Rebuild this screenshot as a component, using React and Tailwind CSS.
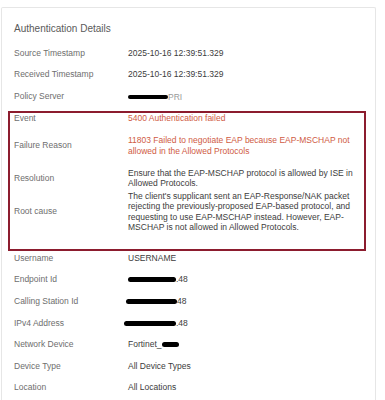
import React from 'react';

// Redaction blob drawn over part of a value
function Blob({ className }) {
  return <span className={`inline-block rounded-full bg-black align-middle ${className}`} />;
}

const topRows = [
  { label: 'Source Timestamp', value: '2025-10-16 12:39:51.329', mt: 'mt-[12.75px]' },
  { label: 'Received Timestamp', value: '2025-10-16 12:39:51.329', mt: 'mt-[11px]' },
  {
    label: 'Policy Server',
    value: (
      <span className="inline-flex items-center">
        <Blob className="w-[40px] h-[4px]" />
        <span className="text-[#9a9a9a]">PRI</span>
      </span>
    ),
    mt: 'mt-[11px]',
  },
];

const boxRows = [
  { label: 'Event', value: '5400 Authentication failed', red: true, mt: 'mt-0' },
  {
    label: 'Failure Reason',
    value: '11803 Failed to negotiate EAP because EAP-MSCHAP not allowed in the Allowed Protocols',
    red: true,
    mt: 'mt-[11.5px]',
  },
  {
    label: 'Resolution',
    value: 'Ensure that the EAP-MSCHAP protocol is allowed by ISE in Allowed Protocols.',
    mt: 'mt-[11.5px]',
  },
  {
    label: 'Root cause',
    value:
      "The client's supplicant sent an EAP-Response/NAK packet rejecting the previously-proposed EAP-based protocol, and requesting to use EAP-MSCHAP instead. However, EAP-MSCHAP is not allowed in Allowed Protocols.",
    mt: 'mt-[2px]',
  },
];

const bottomRows = [
  { label: 'Username', value: 'USERNAME', mt: 'mt-[2px]' },
  {
    label: 'Endpoint Id',
    value: (
      <span className="inline-flex items-center">
        <Blob className="w-[48px] h-[5px]" />
        <span>.48</span>
      </span>
    ),
    mt: 'mt-[11px]',
  },
  {
    label: 'Calling Station Id',
    value: (
      <span className="inline-flex items-center">
        <Blob className="w-[51px] h-[5px] ml-[-2px]" />
        <span>48</span>
      </span>
    ),
    mt: 'mt-[11px]',
  },
  {
    label: 'IPv4 Address',
    value: (
      <span className="inline-flex items-center">
        <Blob className="w-[52px] h-[5px] ml-[-4px]" />
        <span>.48</span>
      </span>
    ),
    mt: 'mt-[11px]',
  },
  {
    label: 'Network Device',
    value: (
      <span className="inline-flex items-center">
        <span>Fortinet_</span>
        <Blob className="w-[17px] h-[5px]" />
      </span>
    ),
    mt: 'mt-[11px]',
  },
  { label: 'Device Type', value: 'All Device Types', mt: 'mt-[11px]' },
  { label: 'Location', value: 'All Locations', mt: 'mt-[11px]' },
];

function Row({ row }) {
  return (
    <div className={`flex items-center ${row.mt}`}>
      <div className="w-[114px] shrink-0 text-[#6e6e6e]">{row.label}</div>
      <div className={`w-[232px] ${row.red ? 'text-[#cf5b44]' : 'text-[#3c3c3c]'}`}>{row.value}</div>
    </div>
  );
}

export default function App() {
  return (
    <div className="h-[400px] bg-white font-['Liberation_Sans',Arial,sans-serif] overflow-hidden">
      <div className="ml-[1px] mt-[7px] w-[375px] h-[393px] border border-b-0 border-[#e6e6e6] rounded-t-[2px] bg-white text-[8.5px] leading-[10.5px]">
        <div className="pl-[12px] pt-[15px]">
          <h2 className="text-[10px] leading-[12px] text-[#5a5a5a]">Authentication Details</h2>
          {topRows.map((r) => (
            <Row key={r.label} row={r} />
          ))}
        </div>

        {/* highlighted failure block */}
        <div className="ml-[6px] mt-[9px] w-[358px] border-2 border-[#8c1c2e] pl-[4px] pb-[16px]">
          {boxRows.map((r) => (
            <Row key={r.label} row={r} />
          ))}
        </div>

        <div className="pl-[12px]">
          {bottomRows.map((r) => (
            <Row key={r.label} row={r} />
          ))}
        </div>
      </div>
    </div>
  );
}
